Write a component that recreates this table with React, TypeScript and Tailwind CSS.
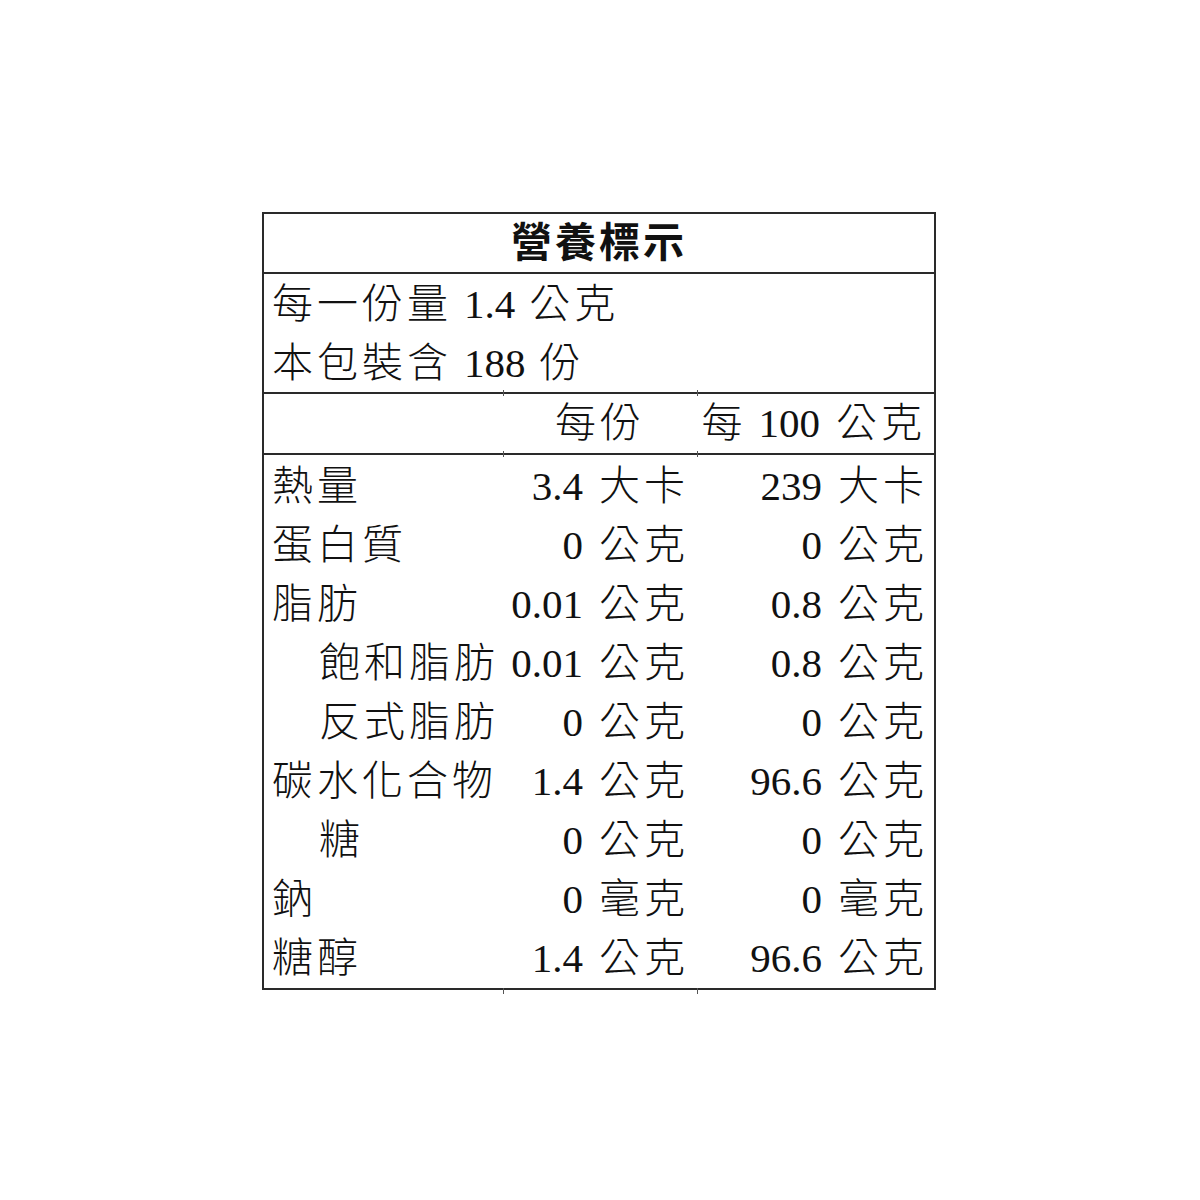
import React from "react";

const F = { fontFamily: '"Liberation Serif", "Noto Sans CJK TC", serif' };

type Row = { label: string; indent?: boolean; a: string; au: string; b: string; bu: string };

const rows: Row[] = [
  { label: "熱量", a: "3.4", au: "大卡", b: "239", bu: "大卡" },
  { label: "蛋白質", a: "0", au: "公克", b: "0", bu: "公克" },
  { label: "脂肪", a: "0.01", au: "公克", b: "0.8", bu: "公克" },
  { label: "飽和脂肪", indent: true, a: "0.01", au: "公克", b: "0.8", bu: "公克" },
  { label: "反式脂肪", indent: true, a: "0", au: "公克", b: "0", bu: "公克" },
  { label: "碳水化合物", a: "1.4", au: "公克", b: "96.6", bu: "公克" },
  { label: "糖", indent: true, a: "0", au: "公克", b: "0", bu: "公克" },
  { label: "鈉", a: "0", au: "毫克", b: "0", bu: "毫克" },
  { label: "糖醇", a: "1.4", au: "公克", b: "96.6", bu: "公克" },
];

function C({ children }: { children: React.ReactNode }) {
  return <span className="tracking-[4px] font-light">{children}</span>;
}

function Ticks() {
  return (
    <>
      <span className="absolute left-[239px] top-[-4px] h-[6px] w-[1px] bg-[#555]" />
      <span className="absolute left-[433px] top-[-4px] h-[6px] w-[1px] bg-[#555]" />
    </>
  );
}

export default function App() {
  return (
    <div className="min-h-[1200px] w-[1200px] bg-white pt-[212px] pl-[262px]" style={F}>
      <div className="w-[674px] border-2 border-[#2a2a2a] text-[41px] leading-none text-[#111]">
        <div className="flex h-[60px] items-center justify-center border-b-2 border-[#2a2a2a] font-bold">
          <span className="tracking-[3px]">營養標示</span>
        </div>
        <div className="flex flex-col border-b-2 border-[#2a2a2a] pl-[8px]">
          <div className="flex h-[60px] items-center">
            <C>每一份量</C>
            <span className="ml-[12px]">1.4</span>
            <span className="ml-[14px]"><C>公克</C></span>
          </div>
          <div className="flex h-[58px] items-center">
            <C>本包裝含</C>
            <span className="ml-[12px]">188</span>
            <span className="ml-[14px]"><C>份</C></span>
          </div>
        </div>
        <div className="relative grid h-[61px] grid-cols-[239px_194px_1fr] items-center border-b-2 border-[#2a2a2a]">
          <Ticks />
          <div />
          <div className="text-center"><C>每份</C></div>
          <div className="flex items-center justify-end pr-[8px]">
            <C>每</C>
            <span className="ml-[12px]">100</span>
            <span className="ml-[16px]"><C>公克</C></span>
          </div>
        </div>
        <div className="relative flex flex-col pt-[2px]">
          <Ticks />
          {rows.map((r) => (
            <div key={r.label} className="grid h-[59px] grid-cols-[239px_194px_1fr] items-center">
              <div className={r.indent ? "pl-[55px]" : "pl-[8px]"}>
                <C>{r.label}</C>
              </div>
              <div className="flex items-center justify-end pr-[8px]">
                <span>{r.a}</span>
                <span className="ml-[16px]"><C>{r.au}</C></span>
              </div>
              <div className="flex items-center justify-end pr-[6px]">
                <span>{r.b}</span>
                <span className="ml-[16px]"><C>{r.bu}</C></span>
              </div>
            </div>
          ))}
          <span className="absolute bottom-[-6px] left-[239px] h-[6px] w-[1px] bg-[#555]" />
          <span className="absolute bottom-[-6px] left-[433px] h-[6px] w-[1px] bg-[#555]" />
        </div>
      </div>
    </div>
  );
}
